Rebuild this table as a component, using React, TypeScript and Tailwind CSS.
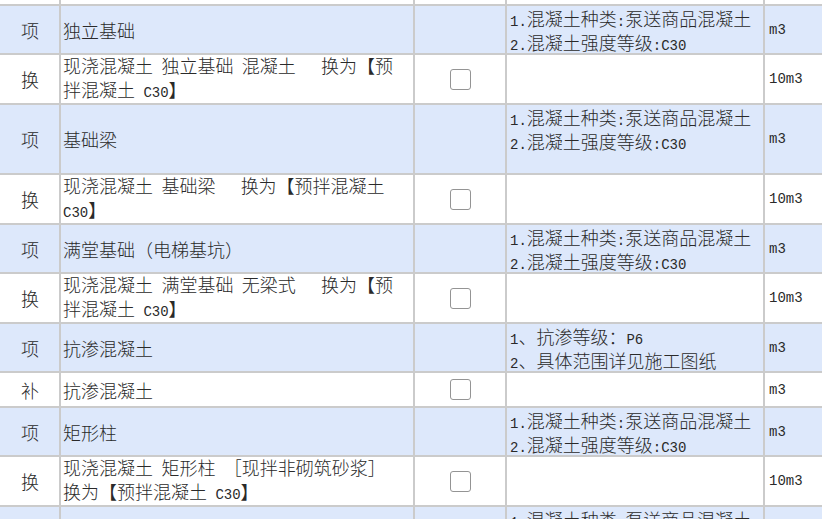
import React from "react";

const CJK = '"Noto Sans CJK SC", "Noto Sans", sans-serif';
const MONO = '"Liberation Mono", "DejaVu Sans Mono", monospace';

const FEAT = ["1.混凝土种类:泵送商品混凝土", "2.混凝土强度等级:C30"];

type Row = {
    tag?: string;
    name?: string[];
    feat?: string[];
    unit?: string;
    check?: boolean;
    blue?: boolean;
    h: string;
};

const rows: Row[] = [
    { h: "h-[6px]" },
    { tag: "项", name: ["独立基础"], feat: FEAT, unit: "m3", blue: true, h: "h-[49px]" },
    { tag: "换", name: ["现浇混凝土 独立基础 混凝土   换为【预", "拌混凝土 C30】"], check: true, unit: "10m3", h: "h-[50px]" },
    { tag: "项", name: ["基础梁"], feat: FEAT, unit: "m3", blue: true, h: "h-[70px]" },
    { tag: "换", name: ["现浇混凝土 基础梁   换为【预拌混凝土", "C30】"], check: true, unit: "10m3", h: "h-[50px]" },
    { tag: "项", name: ["满堂基础（电梯基坑）"], feat: FEAT, unit: "m3", blue: true, h: "h-[49px]" },
    { tag: "换", name: ["现浇混凝土 满堂基础 无梁式   换为【预", "拌混凝土 C30】"], check: true, unit: "10m3", h: "h-[50px]" },
    { tag: "项", name: ["抗渗混凝土"], feat: ["1、抗渗等级：P6", "2、具体范围详见施工图纸"], unit: "m3", blue: true, h: "h-[49px]" },
    { tag: "补", name: ["抗渗混凝土"], check: true, unit: "m3", h: "h-[35px]" },
    { tag: "项", name: ["矩形柱"], feat: FEAT, unit: "m3", blue: true, h: "h-[49px]" },
    { tag: "换", name: ["现浇混凝土 矩形柱 ［现拌非砌筑砂浆］", "换为【预拌混凝土 C30】"], check: true, unit: "10m3", h: "h-[50px]" },
    { tag: "项", name: [""], feat: FEAT, unit: "m3", blue: true, h: "h-[49px]" },
];

// ascii runs get the narrow mono face, like the old songti half-width glyphs
function Txt({ s }: { s: string }) {
    const parts = s.split(/([\x20-\x7e]+)/).filter(Boolean);
    return (
        <>
            {parts.map((p, i) =>
                /^[\x20-\x7e]+$/.test(p) ? (
                    <span key={i} className="text-[14px]" style={{ fontFamily: MONO }}>
                        {p}
                    </span>
                ) : (
                    <span key={i}>{p}</span>
                )
            )}
        </>
    );
}

function CheckBox() {
    return <div className="w-[21px] h-[21px] rounded-[3px] border-[1.5px] border-[#949494] bg-white" />;
}

export default function App() {
    return (
        <main
            className="w-[822px] h-[519px] overflow-hidden bg-white text-[18px] leading-[20px] font-light text-[#2a2a2a]"
            style={{ fontFamily: CJK }}
        >
            {rows.map((r, i) => (
                <div
                    key={i}
                    className={`flex border-b-2 border-[#cbcbcb] ${r.h} ${r.blue ? "bg-[#dde8fb]" : "bg-white"}`}
                >
                    {/* tag */}
                    <div className="w-[61px] shrink-0 border-r-2 border-[#cbcbcb] flex items-center justify-center pl-[1px]">
                        {r.tag}
                    </div>

                    {/* name */}
                    <div className="w-[354px] shrink-0 border-r-2 border-[#cbcbcb] flex flex-col justify-center pl-[2px]">
                        {r.name?.map((l, j) => (
                            <div key={j} className="whitespace-pre">
                                <Txt s={l} />
                            </div>
                        ))}
                    </div>

                    {/* checkbox */}
                    <div className="w-[92px] shrink-0 border-r-2 border-[#cbcbcb] flex items-center justify-center">
                        {r.check && <CheckBox />}
                    </div>

                    {/* features */}
                    <div className="w-[258px] shrink-0 border-r-2 border-[#cbcbcb] pt-[2px] pl-[3px]">
                        {r.feat?.map((l, j) => (
                            <div key={j} className="whitespace-pre">
                                <Txt s={l} />
                            </div>
                        ))}
                    </div>

                    {/* unit */}
                    <div className="flex-1 flex items-center pl-[4px] text-[14px] font-normal" style={{ fontFamily: MONO }}>
                        {r.unit}
                    </div>
                </div>
            ))}
        </main>
    );
}
